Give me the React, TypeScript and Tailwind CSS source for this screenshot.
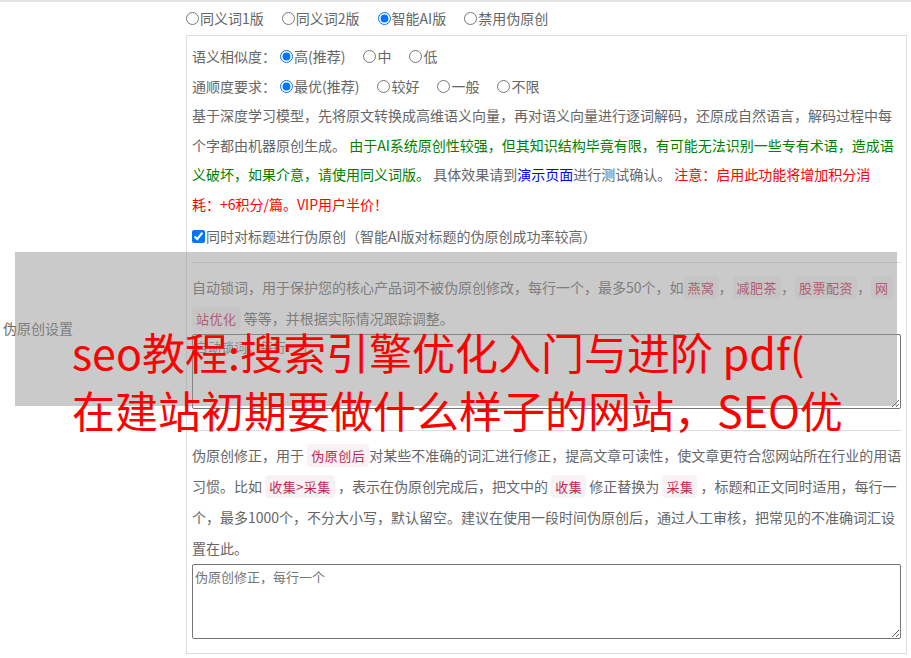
import React from "react";

const font = "font-['Noto_Sans_CJK_SC','Microsoft_YaHei',sans-serif]";

function Radio({ label, name, checked }: { label: string; name: string; checked?: boolean }) {
  return (
    <label className="mr-[18px] inline-flex items-center">
      <input type="radio" name={name} defaultChecked={checked} className="m-0 mr-px h-[13px] w-[13px]" />
      <span>{label}</span>
    </label>
  );
}

function Tag({ children }: { children: React.ReactNode }) {
  return (
    <code className={`rounded-[4px] bg-[#f9f2f4] px-[4px] py-[2px] text-[13px] tracking-[0.5px] text-[#c7254e] ${font}`}>
      {children}
    </code>
  );
}

export default function App() {
  return (
    <div className={`relative h-[658px] w-[911px] overflow-hidden bg-white text-[14px] text-[#666] ${font}`}>
      <div className="flex border-t-2 border-[#e3e3e3] pb-[4px]">
        <div className="flex w-[186px] shrink-0 items-center pl-[3px]">伪原创设置</div>

        <div className="flex-1 pr-[6px]">
          <div className="flex h-[33px] items-center">
            <Radio name="ver" label="同义词1版" />
            <Radio name="ver" label="同义词2版" />
            <Radio name="ver" label="智能AI版" checked />
            <Radio name="ver" label="禁用伪原创" />
          </div>

          <div className="border border-[#ddd] px-[5px] pt-[5px] pb-[14px]">
            <div className="flex h-[30px] items-center">
              <span className="mr-[4px]">语义相似度：</span>
              <Radio name="sim" label="高(推荐)" checked />
              <Radio name="sim" label="中" />
              <Radio name="sim" label="低" />
            </div>
            <div className="flex h-[30px] items-center">
              <span className="mr-[4px]">通顺度要求：</span>
              <Radio name="flu" label="最优(推荐)" checked />
              <Radio name="flu" label="较好" />
              <Radio name="flu" label="一般" />
              <Radio name="flu" label="不限" />
            </div>

            <p className="whitespace-nowrap leading-[29.5px]">
              基于深度学习模型，先将原文转换成高维语义向量，再对语义向量进行逐词解码，还原成自然语言，解码过程中每
              <br />
              个字都由机器原创生成。{" "}
              <span className="text-[#008000]">由于AI系统原创性较强，但其知识结构毕竟有限，有可能无法识别一些专有术语，造成语</span>
              <br />
              <span className="text-[#008000]">义破坏，如果介意，请使用同义词版。</span> 具体效果请到
              <span className="text-[#0000ff]">演示页面</span>进行测试确认。{" "}
              <span className="text-[#ff0000]">注意：启用此功能将增加积分消</span>
              <br />
              <span className="text-[#ff0000]">耗：+6积分/篇。VIP用户半价！</span>
            </p>

            <label className="mt-[2px] flex h-[30px] items-center">
              <input type="checkbox" defaultChecked className="m-0 mr-px h-[13px] w-[13px]" />
              <span>同时对标题进行伪原创（智能AI版对标题的伪原创成功率较高）</span>
            </label>

            <div className="mt-[11px] border-t border-[#ddd]" />

            <p className="mt-[9px] whitespace-nowrap leading-[31px]">
              自动锁词，用于保护您的核心产品词不被伪原创修改，每行一个，最多50个，如<Tag>燕窝</Tag>，<Tag>减肥茶</Tag>，<Tag>股票配资</Tag>，<Tag>网</Tag>
              <br />
              <Tag>站优化</Tag> 等等，并根据实际情况跟踪调整。
            </p>
            <textarea
              placeholder="自动锁词，每行一个"
              className="block h-[75px] w-full rounded-[2px] border border-[#767676] px-[2px] py-[2px] text-[13px] placeholder:text-[#757575]"
            />

            <div className="mt-[21px] border-t border-[#ddd]" />

            <p className="mt-[9px] whitespace-nowrap leading-[31px]">
              伪原创修正，用于 <Tag>伪原创后</Tag>对某些不准确的词汇进行修正，提高文章可读性，使文章更符合您网站所在行业的用语
              <br />
              习惯。比如 <Tag>收集&gt;采集</Tag> ，表示在伪原创完成后，把文中的 <Tag>收集</Tag> 修正替换为 <Tag>采集</Tag> ，标题和正文同时适用，每行一
              <br />
              个，最多1000个，不分大小写，默认留空。建议在使用一段时间伪原创后，通过人工审核，把常见的不准确词汇设
              <br />
              置在此。
            </p>
            <textarea
              placeholder="伪原创修正，每行一个"
              className="block h-[75px] w-full rounded-[2px] border border-[#767676] px-[2px] py-[2px] text-[13px] placeholder:text-[#757575]"
            />
          </div>
        </div>
      </div>

      <div className="absolute left-[15px] top-[252px] h-[154px] w-[882px] bg-[rgba(150,150,150,0.5)]" />
      <div className="absolute left-[72px] top-[322px] whitespace-nowrap text-[43px] leading-[58px] text-[#ff0000]">
        <div>seo教程:搜索引擎优化入门与进阶 pdf(</div>
        <div>在建站初期要做什么样子的网站，SEO优</div>
      </div>
    </div>
  );
}
